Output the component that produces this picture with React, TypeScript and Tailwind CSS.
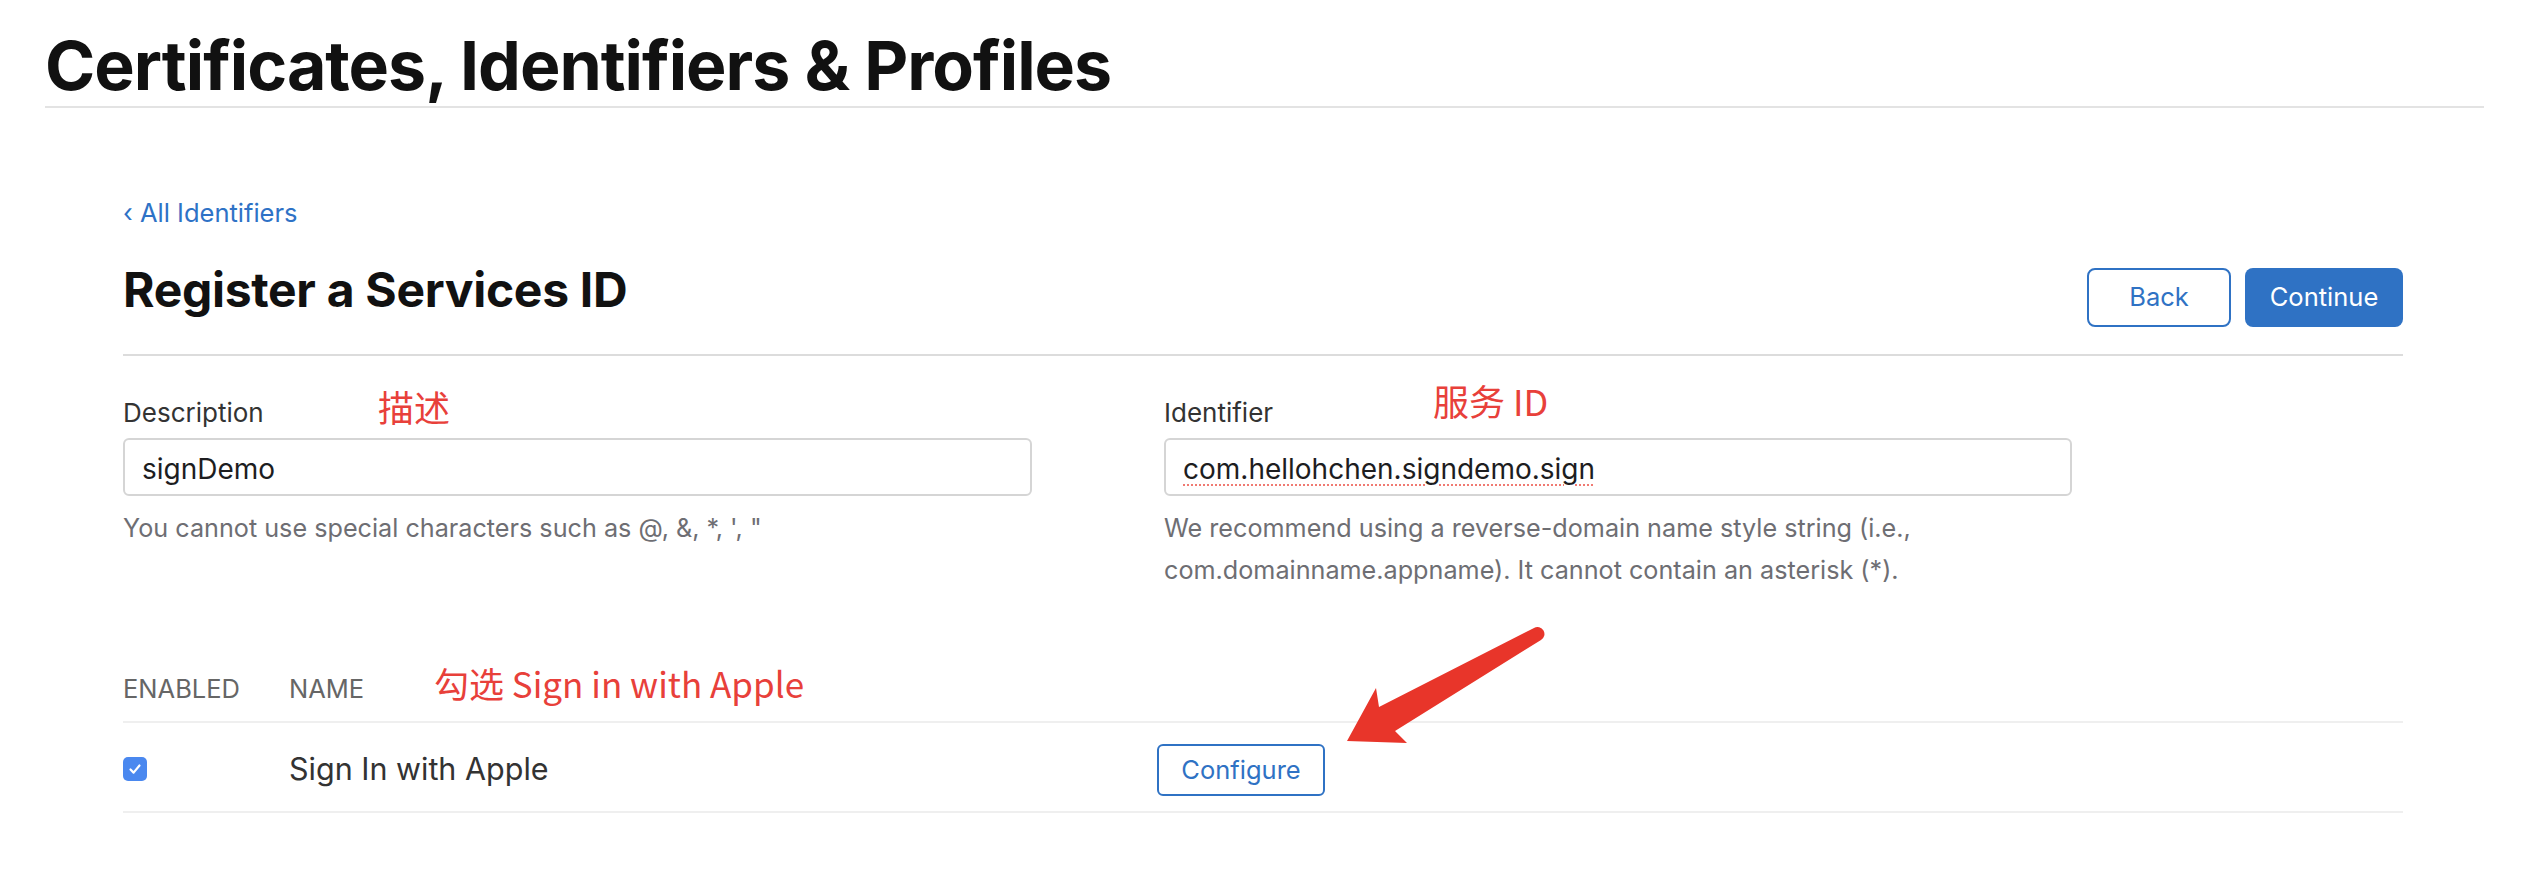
import React from "react";

const Check = () => (
  <svg width="16" height="16" viewBox="0 0 16 16" fill="none">
    <path d="M3.5 8.5 L6.6 11.6 L12.5 4.5" stroke="white" strokeWidth="2.2" strokeLinecap="round" strokeLinejoin="round" />
  </svg>
);

export default function App() {
  return (
    <div className="relative w-[2526px] h-[896px] bg-white overflow-hidden font-['Inter','Noto_Sans_CJK_SC',sans-serif] text-[#1d1d1f]">
      <h1 className="ml-[45px] mr-[42px] pt-[31px] pb-[7px] text-[68px] leading-[68px] font-bold tracking-[-1px] text-[#111111] border-b-2 border-[#e3e3e3]">
        Certificates, Identifiers &amp; Profiles
      </h1>

      <div className="mx-auto w-[2280px]">
        <div className="mt-[90px] text-[25.5px] leading-[30px] text-[#2e72c6]">‹ All Identifiers</div>

        <div className="mt-[32px] flex justify-between items-start pb-[27px] border-b-2 border-[#dcdcdc]">
          <h2 className="text-[48px] leading-[59px] font-bold tracking-[-0.3px] text-[#111111]">Register a Services ID</h2>
          <div className="mt-[8px] flex gap-[14px]">
            <button className="w-[144px] h-[59px] border-2 border-[#2f72c4] rounded-[8px] text-[25.5px] text-[#2f72c4] bg-white">Back</button>
            <button className="w-[158px] h-[59px] rounded-[8px] text-[25.5px] text-white bg-[#2f72c4]">Continue</button>
          </div>
        </div>

        <div className="mt-[35px] grid grid-cols-[1041px_1fr]">
          <div>
            <div className="flex items-baseline h-[36px]">
              <span className="w-[255px] text-[26px] leading-[30px] text-[#333333]">Description</span>
              <span className="text-[36px] leading-[30px] text-[#e8403a] font-['Noto_Sans_CJK_SC',sans-serif]">描述</span>
            </div>
            <div className="mt-[11px] w-[909px] h-[58px] border-2 border-[#d5d5d5] rounded-[6px] px-[17px] pt-[4px] flex items-center text-[28px] text-[#1d1d1f]">
              signDemo
            </div>
            <div className="mt-[11px] text-[25.2px] leading-[42px] text-[#6e6e73]">You cannot use special characters such as @, &amp;, *, ', "</div>
          </div>
          <div>
            <div className="flex items-baseline h-[36px]">
              <span className="w-[269px] text-[26px] leading-[30px] text-[#333333]">Identifier</span>
              <span className="relative top-[-6px] text-[36px] leading-[30px] text-[#e8403a] font-['Noto_Sans_CJK_SC',sans-serif]">服务 ID</span>
            </div>
            <div className="mt-[11px] w-[908px] h-[58px] border-2 border-[#d5d5d5] rounded-[6px] px-[17px] pt-[4px] flex items-center text-[28px] text-[#1d1d1f]">
              <span className="underline decoration-dotted decoration-[#f07a72] decoration-2 underline-offset-[5px]">com.hellohchen.signdemo.sign</span>
            </div>
            <div className="mt-[11px] text-[25.2px] leading-[42px] text-[#6e6e73] whitespace-nowrap">
              We recommend using a reverse-domain name style string (i.e.,
              <br />
              com.domainname.appname). It cannot contain an asterisk (*).
            </div>
          </div>
        </div>

        <div className="mt-[77px] flex items-baseline h-[55px] border-b-2 border-[#efefef]">
          <span className="w-[166px] text-[25.5px] leading-[30px] text-[#666666] uppercase">Enabled</span>
          <span className="w-[145px] text-[25.5px] leading-[30px] text-[#666666] uppercase">Name</span>
          <span className="text-[35px] leading-[30px] text-[#e8403a] font-['Noto_Sans_CJK_SC',sans-serif]">勾选 Sign in with Apple</span>
        </div>

        <div className="flex items-center h-[90px] pt-[4px] border-b-2 border-[#efefef]">
          <div className="w-[166px]">
            <div className="w-[24px] h-[24px] rounded-[5px] bg-[#4a88ef] flex items-center justify-center">
              <Check />
            </div>
          </div>
          <div className="w-[868px] text-[30.5px] text-[#333333]">Sign In with Apple</div>
          <button className="mt-[2px] w-[168px] h-[52px] border-2 border-[#2f72c4] rounded-[6px] text-[25.5px] text-[#2f72c4] bg-white">Configure</button>
        </div>
      </div>

      <svg className="absolute left-0 top-0 pointer-events-none" width="2526" height="896" viewBox="0 0 2526 896">
        <path
          d="M1534 628 L1379 707 L1376 688 L1347 741 L1407 743 L1395 731 L1541 640 A6.5 6.5 0 0 0 1534 628 Z"
          fill="#e8352a"
        />
      </svg>
    </div>
  );
}
